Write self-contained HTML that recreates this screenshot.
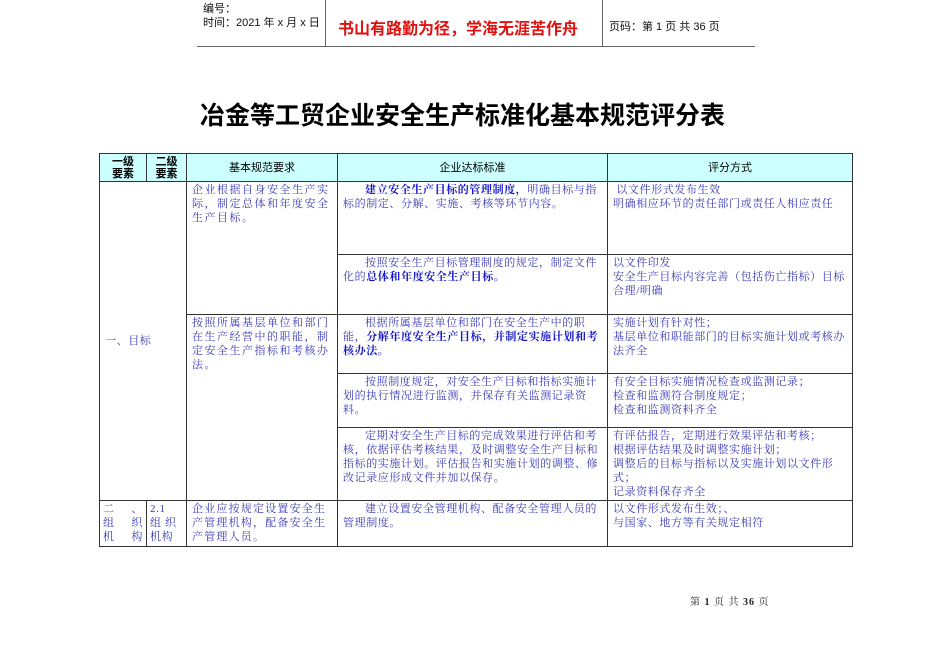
<!DOCTYPE html>
<html><head><meta charset="utf-8"><style>
body{margin:0;width:950px;height:672px;background:#fff;position:relative;overflow:hidden;font-family:"Liberation Serif","Noto Serif CJK SC","Noto Sans CJK SC",serif;}
.a{position:absolute;}
.hs{font-family:"Liberation Sans","Noto Sans CJK SC",sans-serif;font-size:11px;color:#111;}
table{position:absolute;left:99px;top:153px;width:753px;border-collapse:collapse;table-layout:fixed;}
td{border:1px solid #333;vertical-align:top;font-size:11px;line-height:14px;color:#3a3ab8;padding:1px 5px;letter-spacing:0.6px;}
tr.h td{background:#ccffff;color:#000;text-align:center;vertical-align:middle;font-family:"Liberation Sans","Noto Sans CJK SC",sans-serif;font-size:11px;line-height:12px;letter-spacing:0;padding:0;}
b{color:#1414c8;}
.in{text-indent:2em;}
.j{text-align:justify;text-align-last:justify;}
</style></head><body>
<div class="a" style="left:197px;top:46px;width:558px;border-top:1px solid #666"></div>
<div class="a" style="left:325px;top:0;height:47px;border-left:1px solid #666"></div>
<div class="a" style="left:602px;top:0;height:47px;border-left:1px solid #666"></div>
<div class="a hs" style="left:203px;top:2px;line-height:14px">编号：<br>时间：2021 年 x 月 x 日</div>
<div class="a" style="left:338px;top:15px;font-family:'Liberation Sans','Noto Sans CJK SC',sans-serif;font-size:16px;font-weight:bold;color:#e01010">书山有路勤为径，学海无涯苦作舟</div>
<div class="a hs" style="left:609px;top:18px">页码：第 1 页 共 36 页</div>
<div class="a" style="left:200px;top:96px;font-family:'Liberation Sans','Noto Sans CJK SC',sans-serif;font-size:25px;font-weight:bold;color:#000">冶金等工贸企业安全生产标准化基本规范评分表</div>
<table>
<colgroup><col style="width:47px"><col style="width:40px"><col style="width:151px"><col style="width:270px"><col style="width:245px"></colgroup>
<tr class="h" style="height:28px"><td><b style="color:#000">一级<br>要素</b></td><td><b style="color:#000">二级<br>要素</b></td><td>基本规范要求</td><td>企业达标标准</td><td>评分方式</td></tr>
<tr style="height:73px"><td colspan="2" rowspan="5" style="vertical-align:middle">一、目标</td><td rowspan="2" style="letter-spacing:1.5px">企业根据自身安全生产实际，制定总体和年度安全生产目标。</td><td class="in"><b>建立安全生产目标的管理制度，</b>明确目标与指标的制定、分解、实施、考核等环节内容。</td><td>&nbsp;以文件形式发布生效<br>明确相应环节的责任部门或责任人相应责任</td></tr>
<tr style="height:60px"><td class="in">按照安全生产目标管理制度的规定，制定文件化的<b>总体和年度安全生产目标。</b></td><td>以文件印发<br>安全生产目标内容完善（包括伤亡指标）目标合理/明确</td></tr>
<tr style="height:59px"><td rowspan="3" style="letter-spacing:1.5px">按照所属基层单位和部门在生产经营中的职能，制定安全生产指标和考核办法。</td><td class="in">根据所属基层单位和部门在安全生产中的职能，<b>分解年度安全生产目标，并制定实施计划和考核办法。</b></td><td>实施计划有针对性；<br>基层单位和职能部门的目标实施计划或考核办法齐全</td></tr>
<tr style="height:54px"><td class="in">按照制度规定，对安全生产目标和指标实施计划的执行情况进行监测，并保存有关监测记录资料。</td><td>有安全目标实施情况检查或监测记录；<br>检查和监测符合制度规定；<br>检查和监测资料齐全</td></tr>
<tr style="height:68px"><td class="in">定期对安全生产目标的完成效果进行评估和考核，依据评估考核结果，及时调整安全生产目标和指标的实施计划。评估报告和实施计划的调整、修改记录应形成文件并加以保存。</td><td>有评估报告，定期进行效果评估和考核；<br>根据评估结果及时调整实施计划；<br>调整后的目标与指标以及实施计划以文件形式；<br>记录资料保存齐全</td></tr>
<tr style="height:46px"><td style="padding:1px 3px"><div class="j">二 、</div><div class="j">组 织</div><div class="j">机 构</div></td><td style="padding:1px 3px">2.1<br>组 织<br>机构</td><td style="letter-spacing:1.2px">企业应按规定设置安全生产管理机构，配备安全生产管理人员。</td><td class="in">建立设置安全管理机构、配备安全管理人员的管理制度。</td><td>以文件形式发布生效；、<br>与国家、地方等有关规定相符</td></tr>
</table>
<div class="a" style="left:690px;top:593px;font-size:10px;color:#222;letter-spacing:1px">第 <b style="color:#222">1</b> 页 共 <b style="color:#222">36</b> 页</div>
</body></html>
